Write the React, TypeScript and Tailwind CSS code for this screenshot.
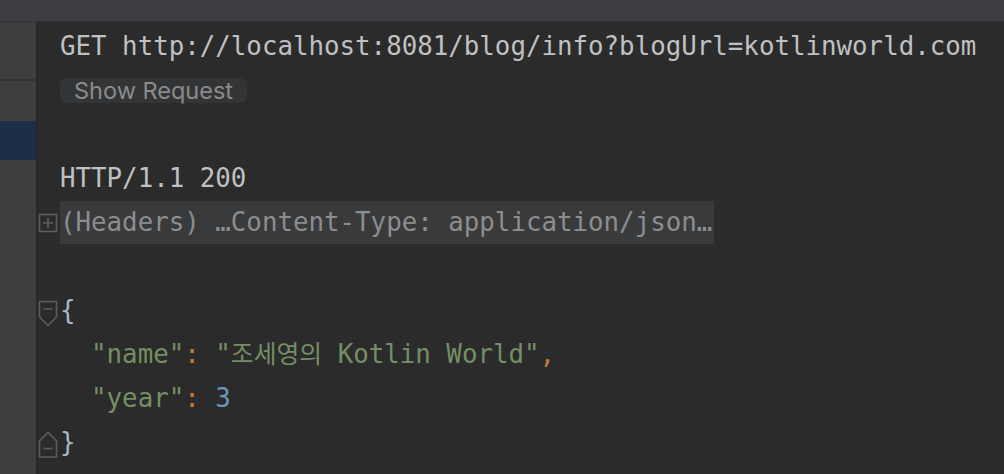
import React from "react";

const mono = { fontFamily: '"DejaVu Sans Mono", "Liberation Mono", "Noto Sans CJK KR", monospace' };

function FoldOpen() {
  return (
    <svg width="20" height="28" viewBox="0 0 20 28" className="mt-[8px]">
      <path d="M1.5 1.5 H18.5 V17 L10 25.5 L1.5 17 Z" fill="none" stroke="#5c5d5f" strokeWidth="1.6" />
      <path d="M5.5 9 H14.5" stroke="#5c5d5f" strokeWidth="1.6" />
    </svg>
  );
}

function FoldClose() {
  return (
    <svg width="20" height="28" viewBox="0 0 20 28" className="mt-[5px]">
      <path d="M1.5 26 H18.5 V10 L10 1.5 L1.5 10 Z" fill="none" stroke="#5c5d5f" strokeWidth="1.6" />
      <path d="M5.5 17.5 H14.5" stroke="#5c5d5f" strokeWidth="1.6" />
    </svg>
  );
}

function FoldPlus() {
  return (
    <svg width="20" height="20" viewBox="0 0 20 20" className="mt-[2px]">
      <rect x="1.5" y="1.5" width="17" height="17" fill="none" stroke="#5c5d5f" strokeWidth="1.6" />
      <path d="M5 10 H15 M10 5 V15" stroke="#5c5d5f" strokeWidth="1.6" />
    </svg>
  );
}

function Line({ gutter, children }: { gutter?: React.ReactNode; children?: React.ReactNode }) {
  return (
    <div className="flex h-[44px] items-center">
      <div className="flex w-[22px] shrink-0 justify-start">{gutter}</div>
      <div className="flex h-full items-center whitespace-pre">{children}</div>
    </div>
  );
}

export default function App() {
  return (
    <div className="flex h-[474px] w-[1004px] flex-col overflow-hidden bg-[#2b2b2b]">
      {/* top bar */}
      <div className="h-[22px] shrink-0 border-b border-[#323335] bg-[#3c3e41]" />
      <div className="flex flex-1">
        {/* left tool panel */}
        <div className="flex w-[36px] shrink-0 flex-col bg-[#3c3e40]">
          <div className="h-[57px]" />
          <div className="h-[2px] bg-[#313234]" />
          <div className="h-[40px]" />
          <div className="h-[39px] bg-[#1d2f47]" />
        </div>
        <div className="w-[2px] shrink-0 bg-[#28282a]" />
        {/* editor */}
        <div className="flex-1 pt-[2px] text-[25.8px] text-[#bfc0c3]" style={mono}>
          <Line>GET http://localhost:8081/blog/info?blogUrl=kotlinworld.com</Line>
          <Line>
            <span
              className="rounded-[7px] bg-[#333435] px-[14px] text-[23.5px] leading-[25px] text-[#8a8b8d]"
              style={{ fontFamily: 'Inter, "Noto Sans", sans-serif' }}
            >
              Show Request
            </span>
          </Line>
          <Line />
          <Line>HTTP/1.1 200</Line>
          <Line gutter={<FoldPlus />}>
            <span className="flex h-[43px] items-center bg-[#393a3b] pr-[2px] text-[#8c8d8f]">
              (Headers) …Content-Type: application/json…
            </span>
          </Line>
          <Line />
          <Line gutter={<FoldOpen />}>
            <span className="text-[#a9b7c6]">{"{"}</span>
          </Line>
          <Line>
            <span className="text-[#748f63]">{'  "name"'}</span>
            <span className="text-[#cc7832]">: </span>
            <span className="text-[#748f63]">
              "<span className="text-[24.8px]">조세영의</span> Kotlin World"
            </span>
            <span className="text-[#cc7832]">,</span>
          </Line>
          <Line>
            <span className="text-[#748f63]">{'  "year"'}</span>
            <span className="text-[#cc7832]">: </span>
            <span className="text-[#6897bb]">3</span>
          </Line>
          <Line gutter={<FoldClose />}>
            <span className="text-[#a9b7c6]">{"}"}</span>
          </Line>
        </div>
      </div>
    </div>
  );
}
